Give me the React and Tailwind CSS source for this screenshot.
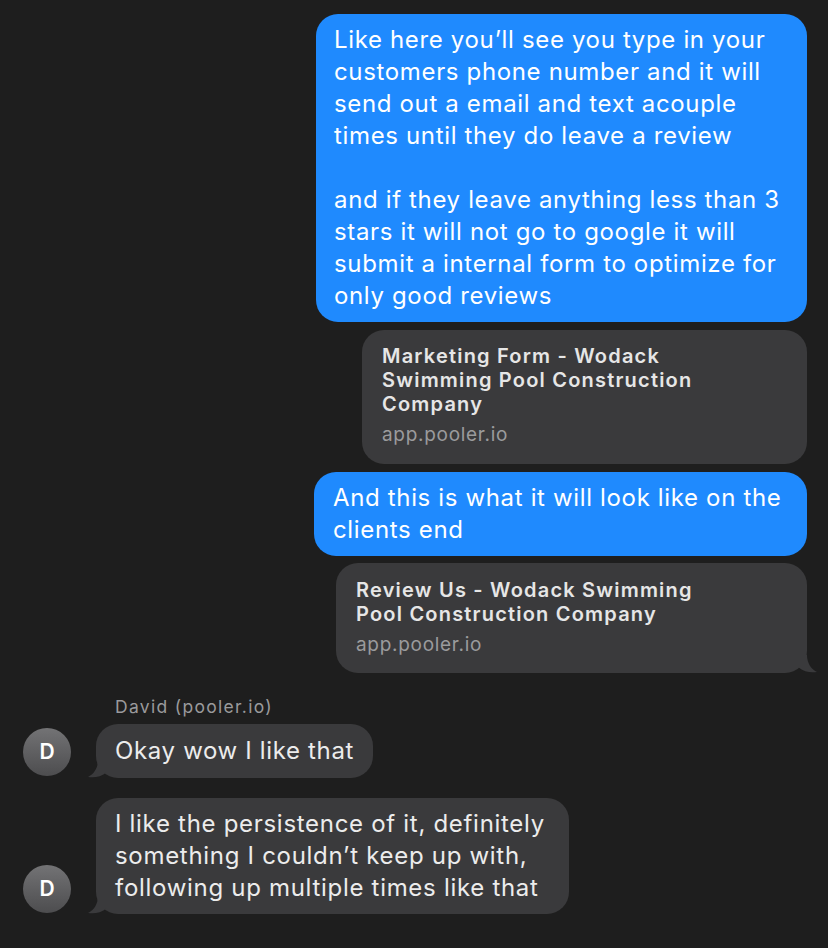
const font = { fontFamily: 'Inter, "Liberation Sans", sans-serif' };

const RightTail = ({ color }) => (
  <svg className="absolute -right-[11px] bottom-0" width="20" height="18" viewBox="0 0 20 18">
    <path d="M0 0 L9 0 C9 8 13 14 19 17 C13 18 6 17 0 12 Z" fill={color} />
  </svg>
);

const LeftTail = ({ color }) => (
  <svg className="absolute -left-[9px] bottom-0" width="20" height="18" viewBox="0 0 20 18">
    <path d="M20 0 L11 0 C11 8 7 14 1 17 C7 18 14 17 20 12 Z" fill={color} />
  </svg>
);

const Avatar = () => (
  <div className="flex h-[48px] w-[48px] shrink-0 items-center justify-center rounded-full bg-gradient-to-b from-[#737375] to-[#4d4d4f] text-[21px] font-semibold text-white">
    D
  </div>
);

export default function App() {
  return (
    <div className="min-h-[948px] w-[828px] bg-[#1e1e1e] pt-[14px]" style={font}>
      <div className="flex flex-col items-end pr-[21px]">
        <div className="w-[491px] rounded-[22px] bg-[#1f8afe] px-[18px] py-[10px] text-[24px] leading-[32px] tracking-[0.65px] text-white">
          <div>Like here you’ll see you type in your</div>
          <div>customers phone number and it will</div>
          <div>send out a email and text acouple</div>
          <div>times until they do leave a review</div>
          <div>&nbsp;</div>
          <div>and if they leave anything less than 3</div>
          <div>stars it will not go to google it will</div>
          <div>submit a internal form to optimize for</div>
          <div>only good reviews</div>
        </div>

        <div className="mt-[8px] h-[134px] w-[445px] rounded-[22px] bg-[#3a3a3c] px-[20px] pt-[14px]">
          <div className="text-[20px] font-semibold leading-[24px] tracking-[1.2px] text-[#e6e6e6]">
            <div>Marketing Form - Wodack</div>
            <div>Swimming Pool Construction</div>
            <div>Company</div>
          </div>
          <div className="mt-[7px] text-[19px] leading-[24px] tracking-[0.7px] text-[#9b9b9d]">app.pooler.io</div>
        </div>

        <div className="mt-[8px] w-[493px] rounded-[22px] bg-[#1f8afe] px-[19px] py-[10px] text-[24px] leading-[32px] tracking-[0.65px] text-white">
          <div>And this is what it will look like on the</div>
          <div>clients end</div>
        </div>

        <div className="relative mt-[7px] h-[110px] w-[471px] rounded-[22px] bg-[#3a3a3c] px-[20px] pt-[15px]">
          <div className="text-[20px] font-semibold leading-[24px] tracking-[1.2px] text-[#e6e6e6]">
            <div>Review Us - Wodack Swimming</div>
            <div>Pool Construction Company</div>
          </div>
          <div className="mt-[7px] text-[19px] leading-[24px] tracking-[0.7px] text-[#9b9b9d]">app.pooler.io</div>
          <RightTail color="#3a3a3c" />
        </div>
      </div>

      <div className="mt-[22px] pl-[115px] text-[17.5px] leading-[24px] tracking-[1.3px] text-[#9a9a9c]">David (pooler.io)</div>

      <div className="mt-[5px] flex items-end gap-[25px] pl-[23px]">
        <div className="mb-[2px]"><Avatar /></div>
        <div className="relative rounded-[22px] bg-[#3a3a3c] py-[11px] pl-[19px] pr-[19px] text-[24px] leading-[32px] tracking-[0.65px] text-[#ececec]">
          Okay wow I like that
          <LeftTail color="#3a3a3c" />
        </div>
      </div>

      <div className="mt-[20px] flex items-end gap-[25px] pl-[23px]">
        <div className="mb-[1px]"><Avatar /></div>
        <div className="relative rounded-[22px] bg-[#3a3a3c] py-[10px] pl-[19px] pr-[24px] text-[24px] leading-[32px] tracking-[0.7px] text-[#ececec]">
          <div>I like the persistence of it, definitely</div>
          <div>something I couldn’t keep up with,</div>
          <div>following up multiple times like that</div>
          <LeftTail color="#3a3a3c" />
        </div>
      </div>
    </div>
  );
}
